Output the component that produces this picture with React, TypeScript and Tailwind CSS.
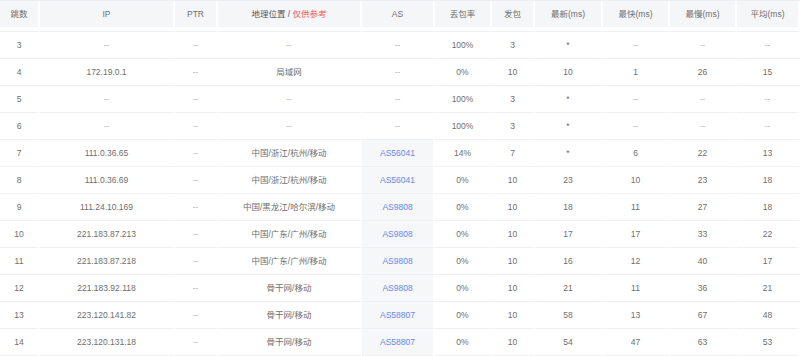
type Hop = {
  hop: string;
  ip: string;
  geo: string;
  as: string;
  loss: string;
  sent: string;
  last: string;
  best: string;
  worst: string;
  avg: string;
};

const hops: Hop[] = [
  { hop: "3", ip: "--", geo: "--", as: "--", loss: "100%", sent: "3", last: "*", best: "--", worst: "--", avg: "--" },
  { hop: "4", ip: "172.19.0.1", geo: "局域网", as: "--", loss: "0%", sent: "10", last: "10", best: "1", worst: "26", avg: "15" },
  { hop: "5", ip: "--", geo: "--", as: "--", loss: "100%", sent: "3", last: "*", best: "--", worst: "--", avg: "--" },
  { hop: "6", ip: "--", geo: "--", as: "--", loss: "100%", sent: "3", last: "*", best: "--", worst: "--", avg: "--" },
  { hop: "7", ip: "111.0.36.65", geo: "中国/浙江/杭州/移动", as: "AS56041", loss: "14%", sent: "7", last: "*", best: "6", worst: "22", avg: "13" },
  { hop: "8", ip: "111.0.36.69", geo: "中国/浙江/杭州/移动", as: "AS56041", loss: "0%", sent: "10", last: "23", best: "10", worst: "23", avg: "18" },
  { hop: "9", ip: "111.24.10.169", geo: "中国/黑龙江/哈尔滨/移动", as: "AS9808", loss: "0%", sent: "10", last: "18", best: "11", worst: "27", avg: "18" },
  { hop: "10", ip: "221.183.87.213", geo: "中国/广东/广州/移动", as: "AS9808", loss: "0%", sent: "10", last: "17", best: "17", worst: "33", avg: "22" },
  { hop: "11", ip: "221.183.87.218", geo: "中国/广东/广州/移动", as: "AS9808", loss: "0%", sent: "10", last: "16", best: "12", worst: "40", avg: "17" },
  { hop: "12", ip: "221.183.92.118", geo: "骨干网/移动", as: "AS9808", loss: "0%", sent: "10", last: "21", best: "11", worst: "36", avg: "21" },
  { hop: "13", ip: "223.120.141.82", geo: "骨干网/移动", as: "AS58807", loss: "0%", sent: "10", last: "58", best: "13", worst: "67", avg: "48" },
  { hop: "14", ip: "223.120.131.18", geo: "骨干网/移动", as: "AS58807", loss: "0%", sent: "10", last: "54", best: "47", worst: "63", avg: "53" },
];

const cols = "grid grid-cols-[40px_135px_43px_144px_73px_57px_43px_68px_67px_67px_63px]";

function Cell({ value, className = "" }: { value: string; className?: string }) {
  const empty = value === "--";
  return (
    <div
      className={`flex items-center justify-center border-r-2 border-b border-r-white border-b-[#eef0f4] ${
        empty ? "text-[#b8b8b8]" : "text-[#6e6e6e]"
      } ${className}`}
    >
      {value}
    </div>
  );
}

export default function App() {
  const headers = ["跳数", "IP", "PTR", "", "AS", "丢包率", "发包", "最新(ms)", "最快(ms)", "最慢(ms)", "平均(ms)"];

  return (
    <div
      className="w-[800px] h-[356px] overflow-hidden bg-white text-[8.5px] leading-none"
      style={{ fontFamily: '"Liberation Sans", "Noto Sans CJK SC", sans-serif' }}
    >
      <div className={`${cols} h-[27px] bg-[#f5f6f8] border-t border-[#eceef2]`}>
        {headers.map((h, i) => (
          <div
            key={i}
            className="flex items-center justify-center border-r-2 border-white text-[#6e6e6e]"
          >
            {i === 3 ? (
              <span>
                <span className="text-[#555]">地理位置 / </span>
                <span className="text-[#f25b5b]">仅供参考</span>
              </span>
            ) : (
              h
            )}
          </div>
        ))}
      </div>

      {/* tail of the row scrolled under the header */}
      <div className={`${cols} h-[5px]`}>
        {headers.map((_, i) => (
          <div key={i} className="border-r-2 border-b border-r-white border-b-[#eef0f4]" />
        ))}
      </div>

      {hops.map((r) => (
        <div key={r.hop} className={`${cols} h-[27px]`}>
          <Cell value={r.hop} />
          <Cell value={r.ip} />
          <Cell value="--" />
          <Cell value={r.geo} />
          {r.as === "--" ? (
            <Cell value="--" />
          ) : (
            <Cell value={r.as} className="bg-[#f6f7f9] !text-[#6889ea]" />
          )}
          <Cell value={r.loss} />
          <Cell value={r.sent} />
          <Cell value={r.last} />
          <Cell value={r.best} />
          <Cell value={r.worst} />
          <Cell value={r.avg} />
        </div>
      ))}
    </div>
  );
}
